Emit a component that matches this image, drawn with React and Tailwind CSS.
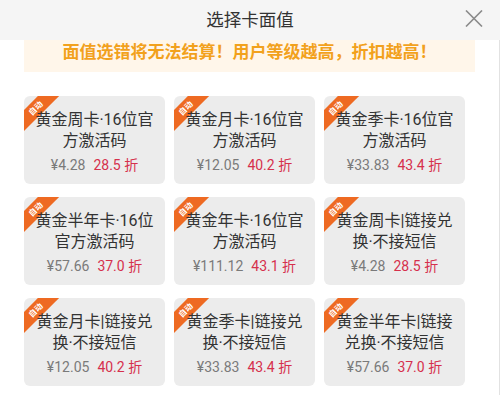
import React from "react";

const cards = [
  { name: "黄金周卡·16位官方激活码", price: "4.28", off: "28.5" },
  { name: "黄金月卡·16位官方激活码", price: "12.05", off: "40.2" },
  { name: "黄金季卡·16位官方激活码", price: "33.83", off: "43.4" },
  { name: "黄金半年卡·16位官方激活码", price: "57.66", off: "37.0" },
  { name: "黄金年卡·16位官方激活码", price: "111.12", off: "43.1" },
  { name: "黄金周卡|链接兑换·不接短信", price: "4.28", off: "28.5" },
  { name: "黄金月卡|链接兑换·不接短信", price: "12.05", off: "40.2" },
  { name: "黄金季卡|链接兑换·不接短信", price: "33.83", off: "43.4" },
  { name: "黄金半年卡|链接兑换·不接短信", price: "57.66", off: "37.0" },
];

const Card = ({ name, price, off }) => (
  <div className="relative h-[88px] rounded-md bg-[#ececec] overflow-hidden flex flex-col items-center pt-[13px] px-2">
    {/* corner ribbon */}
    <div className="absolute left-[-16px] top-[5px] w-[56px] h-[15px] -rotate-45 bg-[#ee6a22] flex items-center justify-center">
      <span className="text-[8px] leading-none font-bold text-white">自动</span>
    </div>
    <p className="relative text-[16px] leading-[21px] text-[#333] text-center">{name}</p>
    <div className="mt-[4px] flex items-center gap-2 leading-5">
      <span className="text-[14px] text-[#7a7a7a]">¥{price}</span>
      <span className="text-[14px] text-[#d6304c]">{off} 折</span>
    </div>
  </div>
);

const App = () => {
  return (
    <div
      className="w-[500px] h-[395px] bg-white overflow-hidden"
      style={{ fontFamily: 'Roboto, "Noto Sans CJK SC", sans-serif' }}
    >
      {/* header */}
      <div className="relative h-10 bg-[#f5f5f5] flex items-center justify-center">
        <h1 className="text-[17.5px] text-[#333]">选择卡面值</h1>
        <button className="absolute right-[17px] top-[10px] w-[18px] h-[17px]">
          <svg viewBox="0 0 18 17" className="w-full h-full" fill="none" stroke="#8a8a8a" strokeWidth="1.6">
            <path d="M1 0.5 L17 16.5 M17 0.5 L1 16.5" />
          </svg>
        </button>
      </div>

      <div className="border-r border-[#e2e2e2] h-[355px]">
        {/* notice */}
        <div className="mx-6 h-8 bg-[#fff6ea] flex items-start justify-center pt-[1px]">
          <p className="text-[17px] leading-[22px] font-bold text-[#f2a11c]">
            面值选错将无法结算！用户等级越高，折扣越高！
          </p>
        </div>

        {/* cards */}
        <div className="pl-6 pr-[34px] pt-6 grid grid-cols-3 gap-x-[9px] gap-y-[13px]">
          {cards.map((c, i) => (
            <Card key={i} {...c} />
          ))}
        </div>
      </div>
    </div>
  );
};

export default App;
